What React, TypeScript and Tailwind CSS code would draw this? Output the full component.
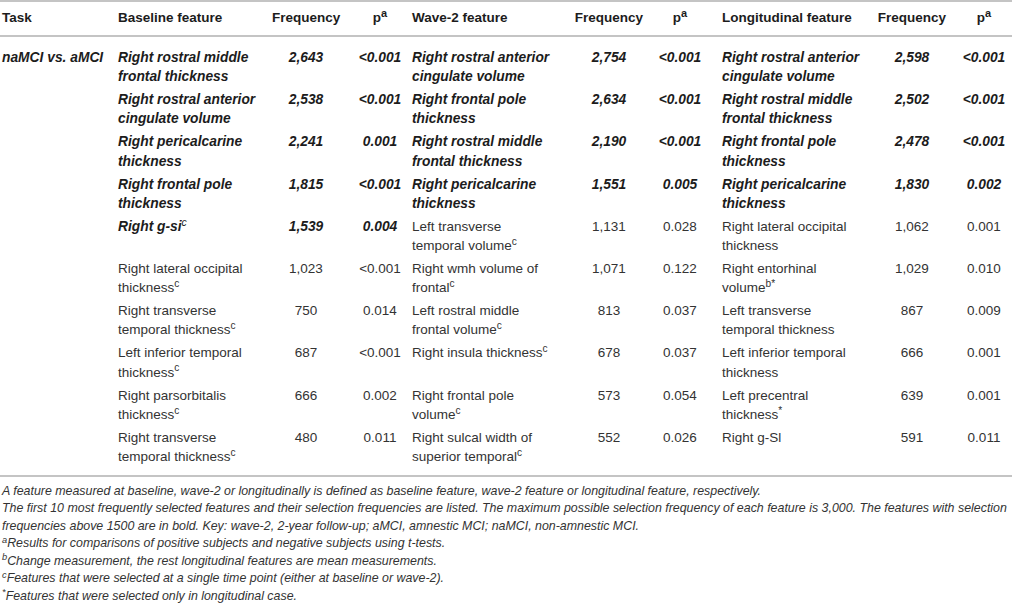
import React from "react"

type Cell = { lines: React.ReactNode[]; bold?: boolean }
type Row = {
  base: Cell
  bf: string
  bp: string
  wave: Cell
  wf: string
  wp: string
  long: Cell
  lf: string
  lp: string
}

const C = () => <sup>c</sup>

const rows: Row[] = [
  {
    base: { lines: ["Right rostral middle", "frontal thickness"], bold: true },
    bf: "2,643",
    bp: "<0.001",
    wave: { lines: ["Right rostral anterior", "cingulate volume"], bold: true },
    wf: "2,754",
    wp: "<0.001",
    long: { lines: ["Right rostral anterior", "cingulate volume"], bold: true },
    lf: "2,598",
    lp: "<0.001",
  },
  {
    base: { lines: ["Right rostral anterior", "cingulate volume"], bold: true },
    bf: "2,538",
    bp: "<0.001",
    wave: { lines: ["Right frontal pole", "thickness"], bold: true },
    wf: "2,634",
    wp: "<0.001",
    long: { lines: ["Right rostral middle", "frontal thickness"], bold: true },
    lf: "2,502",
    lp: "<0.001",
  },
  {
    base: { lines: ["Right pericalcarine", "thickness"], bold: true },
    bf: "2,241",
    bp: "0.001",
    wave: { lines: ["Right rostral middle", "frontal thickness"], bold: true },
    wf: "2,190",
    wp: "<0.001",
    long: { lines: ["Right frontal pole", "thickness"], bold: true },
    lf: "2,478",
    lp: "<0.001",
  },
  {
    base: { lines: ["Right frontal pole", "thickness"], bold: true },
    bf: "1,815",
    bp: "<0.001",
    wave: { lines: ["Right pericalcarine", "thickness"], bold: true },
    wf: "1,551",
    wp: "0.005",
    long: { lines: ["Right pericalcarine", "thickness"], bold: true },
    lf: "1,830",
    lp: "0.002",
  },
  {
    base: {
      lines: [
        <>
          Right g-si
          <sup className="font-normal">c</sup>
        </>,
      ],
      bold: true,
    },
    bf: "1,539",
    bp: "0.004",
    wave: {
      lines: [
        "Left transverse",
        <>
          temporal volume
          <C />
        </>,
      ],
    },
    wf: "1,131",
    wp: "0.028",
    long: { lines: ["Right lateral occipital", "thickness"] },
    lf: "1,062",
    lp: "0.001",
  },
  {
    base: {
      lines: [
        "Right lateral occipital",
        <>
          thickness
          <C />
        </>,
      ],
    },
    bf: "1,023",
    bp: "<0.001",
    wave: {
      lines: [
        "Right wmh volume of",
        <>
          frontal
          <C />
        </>,
      ],
    },
    wf: "1,071",
    wp: "0.122",
    long: {
      lines: [
        "Right entorhinal",
        <>
          volume<sup>b*</sup>
        </>,
      ],
    },
    lf: "1,029",
    lp: "0.010",
  },
  {
    base: {
      lines: [
        "Right transverse",
        <>
          temporal thickness
          <C />
        </>,
      ],
    },
    bf: "750",
    bp: "0.014",
    wave: {
      lines: [
        "Left rostral middle",
        <>
          frontal volume
          <C />
        </>,
      ],
    },
    wf: "813",
    wp: "0.037",
    long: { lines: ["Left transverse", "temporal thickness"] },
    lf: "867",
    lp: "0.009",
  },
  {
    base: {
      lines: [
        "Left inferior temporal",
        <>
          thickness
          <C />
        </>,
      ],
    },
    bf: "687",
    bp: "<0.001",
    wave: {
      lines: [
        <>
          Right insula thickness
          <C />
        </>,
      ],
    },
    wf: "678",
    wp: "0.037",
    long: { lines: ["Left inferior temporal", "thickness"] },
    lf: "666",
    lp: "0.001",
  },
  {
    base: {
      lines: [
        "Right parsorbitalis",
        <>
          thickness
          <C />
        </>,
      ],
    },
    bf: "666",
    bp: "0.002",
    wave: {
      lines: [
        "Right frontal pole",
        <>
          volume
          <C />
        </>,
      ],
    },
    wf: "573",
    wp: "0.054",
    long: {
      lines: [
        "Left precentral",
        <>
          thickness<sup>*</sup>
        </>,
      ],
    },
    lf: "639",
    lp: "0.001",
  },
  {
    base: {
      lines: [
        "Right transverse",
        <>
          temporal thickness
          <C />
        </>,
      ],
    },
    bf: "480",
    bp: "0.011",
    wave: {
      lines: [
        "Right sulcal width of",
        <>
          superior temporal
          <C />
        </>,
      ],
    },
    wf: "552",
    wp: "0.026",
    long: { lines: ["Right g-Sl"] },
    lf: "591",
    lp: "0.011",
  },
]

const grid =
  "grid grid-cols-[116px_154px_68px_72px_160px_74px_76px_155px_70px_65px] pl-[2px]"

const Text: React.FC<{ cell: Cell }> = ({ cell }) => (
  <div
    className={
      cell.bold ? "font-bold italic text-[13.8px] text-[#1c1c1c]" : "text-[#333]"
    }
  >
    {cell.lines.map((l, i) => (
      <div key={i} className="whitespace-nowrap">
        {l}
      </div>
    ))}
  </div>
)

const Num: React.FC<{ v: string; bold?: boolean; className?: string }> = ({
  v,
  bold,
  className,
}) => (
  <div
    className={
      "text-center " +
      (bold ? "font-bold italic text-[13.8px] text-[#1c1c1c] " : "text-[#333] ") +
      (className || "")
    }
  >
    {v}
  </div>
)

const Pa = () => (
  <>
    p<sup className="text-[11px]">a</sup>
  </>
)

export default function App() {
  return (
    <div
      className="w-[1012px] h-[606px] bg-white overflow-hidden text-[13.5px] leading-[19.1px]"
      style={{ fontFamily: '"Liberation Sans", Arial, sans-serif' }}
    >
      <div className="h-[2px] bg-[#c4c4c4]" />
      <div className={grid + " pt-[6px] pb-[8px] font-bold text-[#1c1c1c]"}>
        <div>Task</div>
        <div>Baseline feature</div>
        <div className="text-center">Frequency</div>
        <div className="text-center pl-[8px]">
          <Pa />
        </div>
        <div>Wave-2 feature</div>
        <div className="text-center">Frequency</div>
        <div className="text-center pr-[8px]">
          <Pa />
        </div>
        <div>Longitudinal feature</div>
        <div className="text-center">Frequency</div>
        <div className="text-center pl-[9px]">
          <Pa />
        </div>
      </div>
      <div className="h-[2px] bg-[#c4c4c4]" />
      <div className="pt-[7px] pb-[9px]">
        {rows.map((r, i) => (
          <div key={i} className={grid + " pt-[4px]"}>
            <div className="font-bold italic text-[13.8px] text-[#1c1c1c] whitespace-nowrap">
              {i === 0 ? "naMCI vs. aMCI" : ""}
            </div>
            <Text cell={r.base} />
            <Num v={r.bf} bold={r.base.bold} />
            <Num v={r.bp} bold={r.base.bold} className="pl-[8px]" />
            <Text cell={r.wave} />
            <Num v={r.wf} bold={r.wave.bold} />
            <Num v={r.wp} bold={r.wave.bold} className="pr-[8px]" />
            <Text cell={r.long} />
            <Num v={r.lf} bold={r.long.bold} />
            <Num v={r.lp} bold={r.long.bold} className="pl-[9px]" />
          </div>
        ))}
      </div>
      <div className="h-[2px] bg-[#c4c4c4]" />
      <div className="pt-[6px] pl-[2px] text-[12.4px] leading-[17.5px] italic text-[#333]">
        <div className="whitespace-nowrap">
          A feature measured at baseline, wave-2 or longitudinally is defined as baseline
          feature, wave-2 feature or longitudinal feature, respectively.
        </div>
        <div className="whitespace-nowrap">
          The first 10 most frequently selected features and their selection frequencies are
          listed. The maximum possible selection frequency of each feature is 3,000. The
          features with selection
        </div>
        <div className="whitespace-nowrap">
          frequencies above 1500 are in bold. Key: wave-2, 2-year follow-up; aMCI, amnestic
          MCI; naMCI, non-amnestic MCI.
        </div>
        <div className="whitespace-nowrap">
          <sup>a</sup>Results for comparisons of positive subjects and negative subjects using
          t-tests.
        </div>
        <div className="whitespace-nowrap">
          <sup>b</sup>Change measurement, the rest longitudinal features are mean measurements.
        </div>
        <div className="whitespace-nowrap">
          <sup>c</sup>Features that were selected at a single time point (either at baseline or
          wave-2).
        </div>
        <div className="whitespace-nowrap">
          <sup>*</sup>Features that were selected only in longitudinal case.
        </div>
      </div>
    </div>
  )
}
